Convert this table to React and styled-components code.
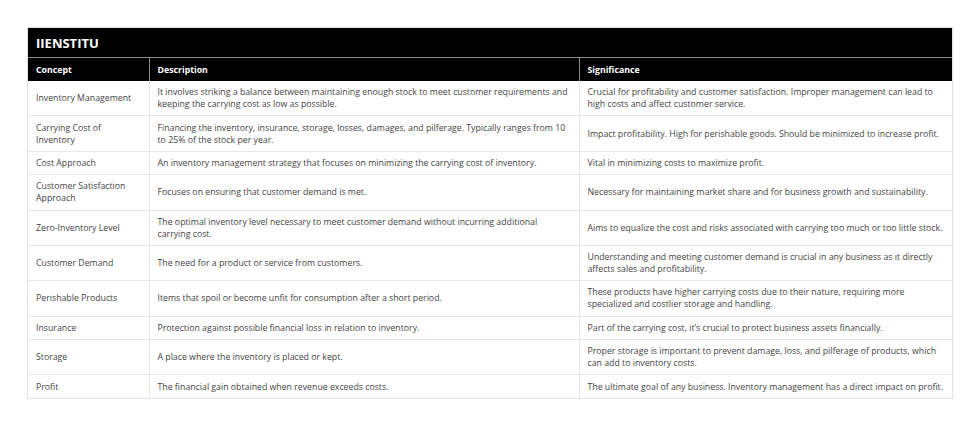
import React from 'react';
import styled, { createGlobalStyle } from 'styled-components';

const rows = [
  {
    concept: 'Inventory Management',
    description:
      'It involves striking a balance between maintaining enough stock to meet customer requirements and keeping the carrying cost as low as possible.',
    significance:
      'Crucial for profitability and customer satisfaction. Improper management can lead to high costs and affect customer service.',
  },
  {
    concept: 'Carrying Cost of Inventory',
    description:
      'Financing the inventory, insurance, storage, losses, damages, and pilferage. Typically ranges from 10 to 25% of the stock per year.',
    significance: 'Impact profitability. High for perishable goods. Should be minimized to increase profit.',
  },
  {
    concept: 'Cost Approach',
    description: 'An inventory management strategy that focuses on minimizing the carrying cost of inventory.',
    significance: 'Vital in minimizing costs to maximize profit.',
  },
  {
    concept: 'Customer Satisfaction Approach',
    description: 'Focuses on ensuring that customer demand is met.',
    significance: 'Necessary for maintaining market share and for business growth and sustainability.',
  },
  {
    concept: 'Zero-Inventory Level',
    description:
      'The optimal inventory level necessary to meet customer demand without incurring additional carrying cost.',
    significance: 'Aims to equalize the cost and risks associated with carrying too much or too little stock.',
  },
  {
    concept: 'Customer Demand',
    description: 'The need for a product or service from customers.',
    significance:
      'Understanding and meeting customer demand is crucial in any business as it directly affects sales and profitability.',
  },
  {
    concept: 'Perishable Products',
    description: 'Items that spoil or become unfit for consumption after a short period.',
    significance:
      'These products have higher carrying costs due to their nature, requiring more specialized and costlier storage and handling.',
  },
  {
    concept: 'Insurance',
    description: 'Protection against possible financial loss in relation to inventory.',
    significance: 'Part of the carrying cost, it’s crucial to protect business assets financially.',
  },
  {
    concept: 'Storage',
    description: 'A place where the inventory is placed or kept.',
    significance:
      'Proper storage is important to prevent damage, loss, and pilferage of products, which can add to inventory costs.',
  },
  {
    concept: 'Profit',
    description: 'The financial gain obtained when revenue exceeds costs.',
    significance: 'The ultimate goal of any business. Inventory management has a direct impact on profit.',
  },
];

const GlobalStyle = createGlobalStyle`
  body {
    margin: 0;
    background: #ffffff;
    font-family: 'Open Sans', 'Liberation Sans', sans-serif;
  }
`;

function App() {
  return (
    <>
      <GlobalStyle />
      <Page>
        <TableBox>
          <Title>IIENSTITU</Title>
          <Table>
            <colgroup>
              <col style={{ width: 121 }} />
              <col style={{ width: 430 }} />
              <col />
            </colgroup>
            <thead>
              <tr>
                <HeadCell>Concept</HeadCell>
                <HeadCell>Description</HeadCell>
                <HeadCell>Significance</HeadCell>
              </tr>
            </thead>
            <tbody>
              {rows.map((row) => (
                <Row key={row.concept}>
                  <Cell>{row.concept}</Cell>
                  <Cell>{row.description}</Cell>
                  <Cell>{row.significance}</Cell>
                </Row>
              ))}
            </tbody>
          </Table>
        </TableBox>
      </Page>
    </>
  );
}

export default App;

const Page = styled.div`
  padding: 27px 27px 0 27px;
`;

const TableBox = styled.div`
  width: 926px;
  border: 1px solid #e2e2e2;
  box-sizing: border-box;
  box-shadow: 0 0 2px rgba(0, 0, 0, 0.06);
`;

const Title = styled.div`
  height: 29px;
  display: flex;
  align-items: center;
  padding-left: 8px;
  background: #000000;
  color: #ffffff;
  font-size: 13px;
  font-weight: 700;
  border-bottom: 1px solid #8a8a8a;
`;

const Table = styled.table`
  width: 100%;
  border-collapse: collapse;
  table-layout: fixed;
`;

const HeadCell = styled.th`
  height: 23px;
  padding: 0 8px;
  background: #000000;
  color: #ffffff;
  font-size: 8.75px;
  font-weight: 700;
  text-align: left;
  border-left: 1px solid #8a8a8a;

  &:first-child {
    border-left: none;
  }
`;

const Row = styled.tr`
  border-bottom: 1px solid #e6e6e6;

  &:last-child {
    border-bottom: none;
  }
`;

const Cell = styled.td`
  padding: 5.2px 9px 5.2px 8px;
  font-size: 8.75px;
  line-height: 12px;
  color: #444444;
  vertical-align: middle;
  border-left: 1px solid #e6e6e6;

  &:first-child {
    border-left: none;
  }
`;
